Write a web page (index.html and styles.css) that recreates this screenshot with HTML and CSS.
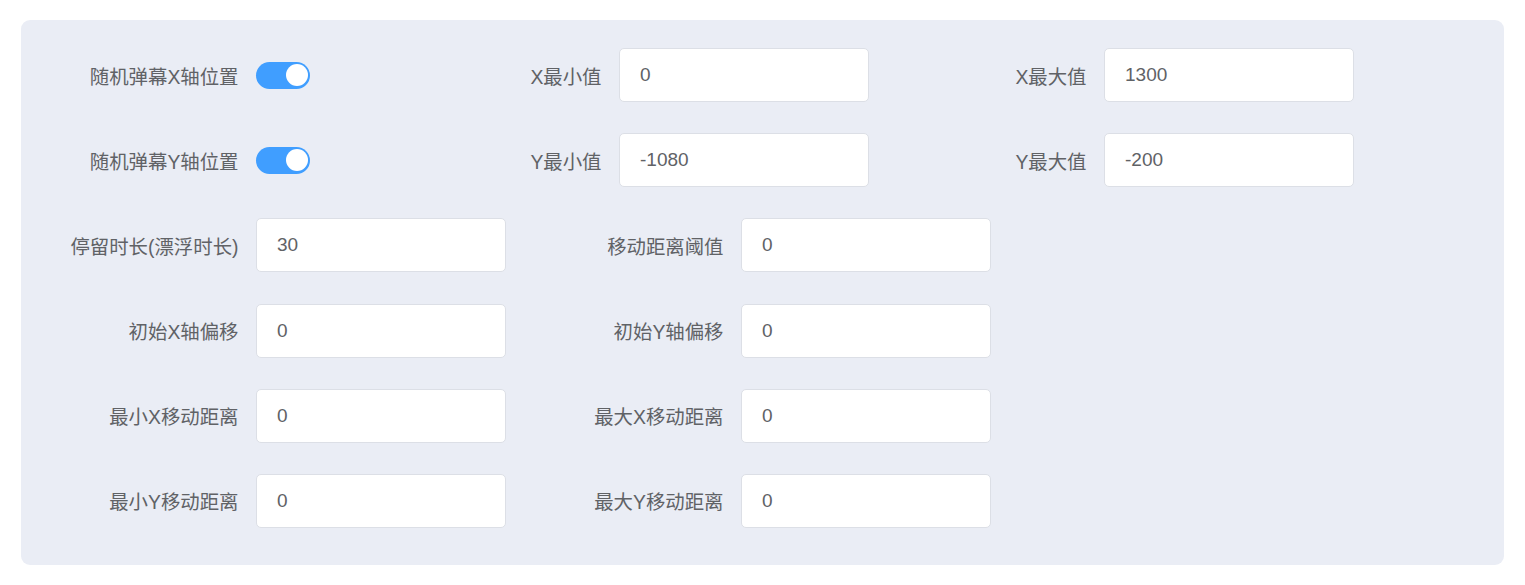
FILE: index.html
```html
<!DOCTYPE html>
<html lang="zh-CN">

<head>
  <meta charset="UTF-8" />
  <meta name="viewport" content="width=device-width, initial-scale=1.0" />
  <title>弹幕设置</title>
  <link rel="stylesheet" href="styles.css">
</head>

<body>
  <div class="panel">
    <form class="form">
      <div class="row">
        <div class="item">
          <label class="label">随机弹幕X轴位置</label>
          <div class="control-switch">
            <span class="switch is-on"><span class="knob"></span></span>
          </div>
        </div>
        <div class="item">
          <label class="label">X最小值</label>
          <input class="input" type="text" value="0">
        </div>
        <div class="item">
          <label class="label">X最大值</label>
          <input class="input" type="text" value="1300">
        </div>
      </div>

      <div class="row">
        <div class="item">
          <label class="label">随机弹幕Y轴位置</label>
          <div class="control-switch">
            <span class="switch is-on"><span class="knob"></span></span>
          </div>
        </div>
        <div class="item">
          <label class="label">Y最小值</label>
          <input class="input" type="text" value="-1080">
        </div>
        <div class="item">
          <label class="label">Y最大值</label>
          <input class="input" type="text" value="-200">
        </div>
      </div>

      <div class="row">
        <div class="item">
          <label class="label">停留时长(漂浮时长)</label>
          <input class="input" type="text" value="30">
        </div>
        <div class="item">
          <label class="label">移动距离阈值</label>
          <input class="input" type="text" value="0">
        </div>
      </div>

      <div class="row">
        <div class="item">
          <label class="label">初始X轴偏移</label>
          <input class="input" type="text" value="0">
        </div>
        <div class="item">
          <label class="label">初始Y轴偏移</label>
          <input class="input" type="text" value="0">
        </div>
      </div>

      <div class="row">
        <div class="item">
          <label class="label">最小X移动距离</label>
          <input class="input" type="text" value="0">
        </div>
        <div class="item">
          <label class="label">最大X移动距离</label>
          <input class="input" type="text" value="0">
        </div>
      </div>

      <div class="row">
        <div class="item">
          <label class="label">最小Y移动距离</label>
          <input class="input" type="text" value="0">
        </div>
        <div class="item">
          <label class="label">最大Y移动距离</label>
          <input class="input" type="text" value="0">
        </div>
      </div>
    </form>
  </div>
</body>

</html>
```

FILE: styles.css
```css
body {
  font-family: 'Liberation Sans', 'Noto Sans CJK SC', sans-serif;
  background-color: #ffffff;
  color: #606266;
  margin: 0;
  padding: 20px 21px;
}

.panel {
  background-color: #eaedf5;
  border-radius: 9px;
  padding: 28px 0 37px;
}

.form {
  display: flex;
  flex-direction: column;
  gap: 31.2px;
  margin: 0;
}

.row {
  display: flex;
  align-items: center;
  height: 54px;
}

.item {
  display: flex;
  align-items: center;
}

.label {
  width: 235px;
  box-sizing: border-box;
  padding-right: 17.5px;
  text-align: right;
  font-size: 19.4px;
  color: #606266;
}

.input {
  width: 250px;
  height: 54px;
  box-sizing: border-box;
  border: 1px solid #dcdfe6;
  border-radius: 5px;
  background-color: #ffffff;
  padding: 0 20px;
  font-family: inherit;
  font-size: 19px;
  color: #606266;
  outline: none;
}

.control-switch {
  width: 128px;
  display: flex;
  align-items: center;
}

.switch {
  display: flex;
  align-items: center;
  width: 54px;
  height: 27px;
  box-sizing: border-box;
  padding: 0 2.5px;
  border-radius: 14px;
  background-color: #dcdfe6;
}

.switch.is-on {
  background-color: #409eff;
  justify-content: flex-end;
}

.knob {
  width: 22px;
  height: 22px;
  border-radius: 50%;
  background-color: #ffffff;
}
```
